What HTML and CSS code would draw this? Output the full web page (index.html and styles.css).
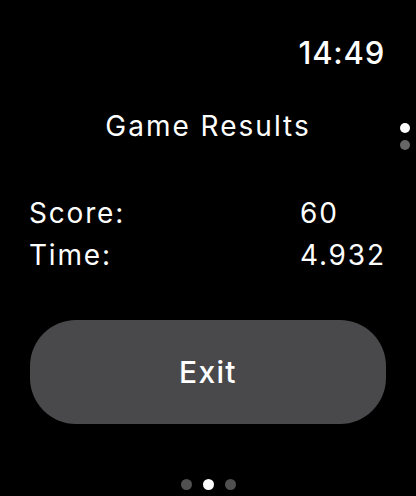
FILE: index.html
```html
<!DOCTYPE html>
<html lang="en">
<head>
  <meta charset="UTF-8" />
  <meta name="viewport" content="width=device-width, initial-scale=1.0" />
  <title>Game Results</title>
  <link rel="stylesheet" href="styles.css">
</head>
<body>
  <div class="screen">
    <div class="status-bar">
      <span class="clock">14:49</span>
    </div>

    <h1 class="title">Game Results</h1>

    <div class="results">
      <span class="label">Score:</span>
      <span class="value">60</span>
      <span class="label">Time:</span>
      <span class="value">4.932</span>
    </div>

    <button class="exit-button">Exit</button>

    <div class="page-dots">
      <span class="dot"></span>
      <span class="dot active"></span>
      <span class="dot"></span>
    </div>

    <div class="scroll-dots">
      <span class="dot active"></span>
      <span class="dot"></span>
    </div>
  </div>
</body>
</html>
```

FILE: styles.css
```css
body {
  margin: 0;
  background-color: #000;
  color: #fff;
  font-family: Inter, 'Noto Sans', sans-serif;
}

.screen {
  position: relative;
  width: 416px;
  height: 496px;
  display: flex;
  flex-direction: column;
  overflow: hidden;
}

.status-bar {
  display: flex;
  justify-content: flex-end;
  padding: 33px 31px 0 0;
  height: 40px;
}

.clock {
  font-size: 31px;
  font-weight: 500;
  line-height: 40px;
  letter-spacing: 0.8px;
}

.title {
  margin: 35px 0 0;
  font-size: 28px;
  font-weight: 400;
  line-height: 36px;
  letter-spacing: 2px;
  text-align: center;
}

.results {
  display: grid;
  grid-template-columns: 271px auto;
  margin: 48px 0 0 29px;
  font-size: 28px;
  line-height: 42px;
  letter-spacing: 1.8px;
}

.exit-button {
  margin: 44px 30px 0;
  height: 104px;
  border: none;
  border-radius: 46px;
  background-color: #49494b;
  color: #fff;
  font-family: inherit;
  font-size: 30px;
  font-weight: 500;
  letter-spacing: 1.3px;
}

.page-dots {
  display: flex;
  justify-content: center;
  gap: 11px;
  margin-top: 55px;
}

.dot {
  width: 11px;
  height: 11px;
  border-radius: 50%;
  background-color: #505050;
}

.dot.active {
  background-color: #fff;
}

.scroll-dots {
  position: absolute;
  top: 123px;
  right: 6px;
  display: flex;
  flex-direction: column;
  gap: 7px;
}

.scroll-dots .dot {
  width: 10px;
  height: 10px;
  background-color: #666;
}

.scroll-dots .dot.active {
  background-color: #fff;
}
```
